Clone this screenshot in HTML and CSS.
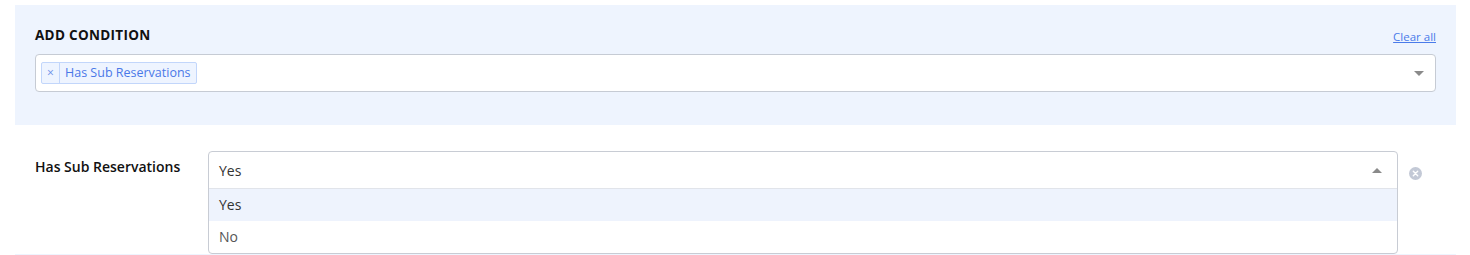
FILE: index.html
```html
<!DOCTYPE html>
<html lang="en">
<head>
  <meta charset="UTF-8">
  <title>Conditions</title>
  <link rel="stylesheet" href="styles.css">
</head>
<body>

  <!-- Choix des conditions -->
  <div class="panel">
    <div class="panel-head">
      <h3>ADD CONDITION</h3>
      <a href="#" class="clear-all">Clear all</a>
    </div>
    <div class="tags-box">
      <span class="tag"><span class="tag-remove">×</span><span class="tag-label">Has Sub Reservations</span></span>
      <span class="caret-down"></span>
    </div>
  </div>

  <!-- Condition sélectionnée -->
  <div class="condition-row">
    <label class="condition-label">Has Sub Reservations</label>
    <div class="select">
      <div class="select-head">
        <span>Yes</span>
        <span class="caret-up"></span>
      </div>
      <ul class="select-options">
        <li class="active">Yes</li>
        <li>No</li>
      </ul>
    </div>
    <span class="remove-condition">
      <svg width="13" height="13" viewBox="0 0 13 13"><circle cx="6.5" cy="6.5" r="6.5" fill="#c3c9d6"/><path d="M4.3 4.3l4.4 4.4M8.7 4.3l-4.4 4.4" stroke="#fff" stroke-width="1.4" stroke-linecap="round"/></svg>
    </span>
  </div>

  <div class="panel panel-next"></div>

</body>
</html>
```

FILE: styles.css
```css
body {
  font-family: 'Open Sans', sans-serif;
  margin: 0;
  padding: 5px 14px 0 15px;
  background-color: #fff;
  color: #333;
}

.panel {
  background-color: #eef4fe;
  padding: 20px 20px 33px 20px;
}

.panel-head {
  display: flex;
  justify-content: space-between;
  align-items: flex-end;
  height: 29px;
  margin-bottom: 20px;
}

.panel-head h3 {
  margin: 0;
  font-size: 13.5px;
  font-weight: 700;
  color: #111;
  letter-spacing: 0.3px;
  line-height: 20px;
  align-self: flex-start;
}

.clear-all {
  font-size: 11.5px;
  color: #4a7bea;
  text-decoration: underline;
  line-height: 16px;
  position: relative;
  top: -9px;
}

.tags-box {
  display: flex;
  align-items: center;
  height: 36px;
  padding: 0 5px;
  background: #fff;
  border: 1px solid #c6cbd4;
  border-radius: 4px;
  margin-top: -20px;
}

.tag {
  display: flex;
  align-items: stretch;
  height: 20px;
  border: 1px solid #c2d6fb;
  background: #eef4ff;
  border-radius: 2px;
  color: #4a78e8;
  font-size: 12.5px;
  line-height: 20px;
}

.tag-remove {
  width: 17px;
  text-align: center;
  border-right: 1px solid #c2d6fb;
  font-size: 12px;
  color: #6c8fe8;
}

.tag-label {
  padding: 0 5px 0 5px;
}

.caret-down {
  margin-left: auto;
  margin-right: 6px;
  border-left: 5px solid transparent;
  border-right: 5px solid transparent;
  border-top: 5px solid #8a8a8a;
}

.condition-row {
  display: flex;
  align-items: flex-start;
  padding: 26px 0 0 20px;
}

.condition-label {
  width: 173px;
  font-size: 14px;
  font-weight: 600;
  color: #111;
  line-height: 18px;
  padding-top: 7px;
}

.select {
  flex: 1;
  border: 1px solid #c8ccd4;
  border-radius: 4px;
  background: #fff;
  font-size: 14px;
}

.select-head {
  display: flex;
  align-items: center;
  justify-content: space-between;
  height: 36px;
  padding: 0 10px;
  border-bottom: 1px solid #e1e4ea;
}

.caret-up {
  border-left: 5px solid transparent;
  border-right: 5px solid transparent;
  border-bottom: 5px solid #8a8a8a;
  margin-right: 5px;
}

.select-options {
  list-style: none;
  margin: 0;
  padding: 0;
}

.select-options li {
  height: 32px;
  line-height: 31px;
  padding: 0 10px;
  color: #555;
}

.select-options li.active {
  background: #eef3fd;
  color: #333;
}

.remove-condition {
  width: 47px;
  padding: 12px 0 0 11px;
}

.panel-next {
  height: 2px;
  padding: 0;
}
```
